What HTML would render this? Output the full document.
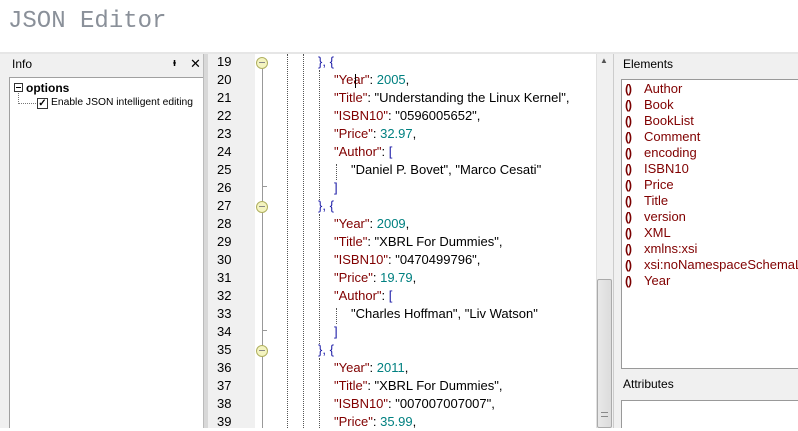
<!DOCTYPE html>
<html><head><meta charset="utf-8"><style>
*{margin:0;padding:0;box-sizing:border-box}
body{width:798px;height:428px;overflow:hidden;background:#fff;font-family:"Liberation Sans",Arial,sans-serif;font-size:12px;position:relative}
.abs{position:absolute}
.k{color:#800000}.p{color:#1a1aa6}.n{color:#008080}.s{color:#000}
.code{font-size:13px}
.code div{height:18px;line-height:18px;white-space:pre}
.code .i1{padding-left:16px}
.code .i2{padding-left:33px}
.el div{height:16px;line-height:16px;color:#800000}
.el b{font-weight:bold;color:#7a0000;display:inline-block;width:19px;font-size:12px;letter-spacing:-1px}
.vd{position:absolute;width:0;border-left:1px dotted #555}
.fold{position:absolute;left:256px;width:12px;height:12px;border-radius:50%;border:1px solid #b0b060;background:#f4f4c0}
.fold::after{content:"";position:absolute;left:2px;top:4px;width:6px;height:1px;background:#888}
</style></head><body>
<div class="abs" style="left:8px;top:8px;font-family:'Liberation Mono',monospace;font-size:24px;color:#8a9099">JSON Editor</div>

<div class="abs" style="left:0;top:52px;width:798px;height:2px;background:#e6e6e6"></div>
<div class="abs" style="left:0;top:54px;width:208px;height:374px;background:#f0f0f0"></div>
<div class="abs" style="left:12px;top:57px;font-size:12px">Info</div>
<div class="abs" style="left:173px;top:57px;font-size:11px;font-weight:bold">ᵻ</div>
<div class="abs" style="left:190px;top:56px;font-size:13px">✕</div>
<div class="abs" style="left:9px;top:77px;width:195px;height:351px;background:#fff;border:1px solid #a0a0a0;border-bottom:none"></div>
<div class="abs" style="left:14px;top:83px;width:9px;height:9px;border:1px solid #333;background:#fff"></div>
<div class="abs" style="left:16px;top:87px;width:5px;height:1px;background:#000"></div>
<div class="abs" style="left:26px;top:81px;font-weight:bold">options</div>
<div class="abs" style="left:18px;top:93px;height:11px;border-left:1px dotted #777"></div>
<div class="abs" style="left:18px;top:103px;width:18px;border-top:1px dotted #777"></div>
<div class="abs" style="left:37px;top:98px;width:11px;height:11px;border:1px solid #333;background:#fff;font-size:10px;line-height:9px;text-align:center;font-weight:bold">✓</div>
<div class="abs" style="left:51px;top:97px;font-size:10.3px">Enable JSON intelligent editing</div>
<div class="abs" style="left:203px;top:54px;width:5px;height:374px;background:#d8d8d8;border-left:1px solid #bbb"></div>

<div class="abs" style="left:208px;top:54px;width:47px;height:374px;background:#f0f0f0"></div>
<div class="abs" style="left:262px;top:60px;width:1px;height:368px;background:#999"></div>
<div class="abs" style="left:262px;top:186px;width:5px;height:1px;background:#999"></div>
<div class="abs" style="left:262px;top:330px;width:5px;height:1px;background:#999"></div>
<div class="fold" style="top:57px"></div>
<div class="fold" style="top:201px"></div>
<div class="fold" style="top:345px"></div>
<div class="abs" style="left:217px;top:53px;line-height:18px;font-size:13px">19<br>20<br>21<br>22<br>23<br>24<br>25<br>26<br>27<br>28<br>29<br>30<br>31<br>32<br>33<br>34<br>35<br>36<br>37<br>38<br>39</div>

<div class="vd" style="left:287px;top:54px;height:374px"></div>
<div class="vd" style="left:303px;top:54px;height:374px"></div>
<div class="vd" style="left:319px;top:70px;height:130px"></div>
<div class="vd" style="left:319px;top:214px;height:130px"></div>
<div class="vd" style="left:319px;top:358px;height:70px"></div>
<div class="vd" style="left:336px;top:164px;height:16px"></div>
<div class="vd" style="left:336px;top:308px;height:16px"></div>

<div class="abs code" style="left:318px;top:53px">
<div><span class="p">}, {</span></div>
<div class="i1"><span class="k">"Year"</span>: <span class="n">2005</span>,</div>
<div class="i1"><span class="k">"Title"</span>: "Understanding the Linux Kernel",</div>
<div class="i1"><span class="k">"ISBN10"</span>: "0596005652",</div>
<div class="i1"><span class="k">"Price"</span>: <span class="n">32.97</span>,</div>
<div class="i1"><span class="k">"Author"</span>: <span class="p">[</span></div>
<div class="i2">"Daniel P. Bovet", "Marco Cesati"</div>
<div class="i1"><span class="p">]</span></div>
<div><span class="p">}, {</span></div>
<div class="i1"><span class="k">"Year"</span>: <span class="n">2009</span>,</div>
<div class="i1"><span class="k">"Title"</span>: "XBRL For Dummies",</div>
<div class="i1"><span class="k">"ISBN10"</span>: "0470499796",</div>
<div class="i1"><span class="k">"Price"</span>: <span class="n">19.79</span>,</div>
<div class="i1"><span class="k">"Author"</span>: <span class="p">[</span></div>
<div class="i2">"Charles Hoffman", "Liv Watson"</div>
<div class="i1"><span class="p">]</span></div>
<div><span class="p">}, {</span></div>
<div class="i1"><span class="k">"Year"</span>: <span class="n">2011</span>,</div>
<div class="i1"><span class="k">"Title"</span>: "XBRL For Dummies",</div>
<div class="i1"><span class="k">"ISBN10"</span>: "007007007007",</div>
<div class="i1"><span class="k">"Price"</span>: <span class="n">35.99</span>,</div>
</div>
<div class="abs" style="left:355px;top:74px;width:1px;height:14px;background:#000"></div>

<div class="abs" style="left:596px;top:54px;width:17px;height:374px;background:#f0f0f0;border-left:1px solid #e0e0e0"></div>
<div class="abs" style="left:600px;top:56px;font-size:8px;color:#555">▲</div>
<div class="abs" style="left:597px;top:279px;width:15px;height:149px;background:linear-gradient(90deg,#e8e8e8,#dcdcdc);border:1px solid #aaa;border-radius:2px"></div>
<div class="abs" style="left:601px;top:412px;width:7px;height:5px;border-top:1px solid #888;border-bottom:1px solid #888"></div>

<div class="abs" style="left:613px;top:54px;width:185px;height:374px;background:#f0f0f0;border-left:1px solid #ccc"></div>
<div class="abs" style="left:623px;top:57px;font-size:12px">Elements</div>
<div class="abs" style="left:621px;top:79px;width:177px;height:290px;background:#fff;border:1px solid #999;border-right:none"></div>
<div class="abs el" style="left:625px;top:81px;font-size:13px;white-space:nowrap;width:173px;overflow:hidden">
<div><b>()</b>Author</div><div><b>()</b>Book</div><div><b>()</b>BookList</div><div><b>()</b>Comment</div><div><b>()</b>encoding</div><div><b>()</b>ISBN10</div><div><b>()</b>Price</div><div><b>()</b>Title</div><div><b>()</b>version</div><div><b>()</b>XML</div><div><b>()</b>xmlns:xsi</div><div><b>()</b>xsi:noNamespaceSchemaLocation</div><div><b>()</b>Year</div>
</div>
<div class="abs" style="left:623px;top:377px;font-size:12px">Attributes</div>
<div class="abs" style="left:621px;top:400px;width:177px;height:28px;background:#fff;border:1px solid #999;border-right:none;border-bottom:none"></div>
</body></html>
